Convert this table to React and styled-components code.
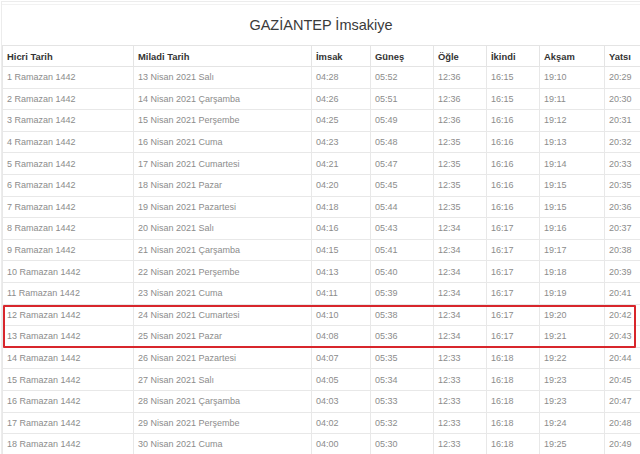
import React from "react";
import styled, { createGlobalStyle } from "styled-components";

const Global = createGlobalStyle`
  html, body { margin: 0; padding: 0; background: #fff; overflow: hidden; }
  body { font-family: "Liberation Sans", Arial, sans-serif; }
`;

const Page = styled.div`
  width: 700px;
  height: 454px;
  padding: 1px 0 0 1px;
  box-sizing: border-box;
`;

const Frame = styled.div`
  border-top: 1px solid #ececec;
  border-left: 1px solid #ececec;
  position: relative;
`;

const Title = styled.h1`
  margin: 2px 0 0 0;
  height: 41px;
  display: flex;
  align-items: center;
  justify-content: center;
  width: 638px;
  font-size: 14.5px;
  font-weight: 400;
  color: #3a3a3a;
  border-top: 1px solid #f2f2f2;
  box-sizing: border-box;
  padding-bottom: 1px;
`;

const Table = styled.table`
  border-collapse: collapse;
  table-layout: fixed;
  width: 668px;
  font-size: 9px;
`;

const Th = styled.th`
  text-align: left;
  font-weight: 700;
  font-size: 9.4px;
  color: #333;
  height: 21px;
  padding: 0 0 0 4px;
  border: 1px solid #e4e4e4;
  box-sizing: border-box;
`;

const Tr = styled.tr`
  height: 21.6px;
`;

const Td = styled.td`
  padding: 0 0 0 4px;
  color: #8c8c8c;
  font-size: 9px;
  border: 1px solid #e8e8e8;
  white-space: nowrap;
  overflow: hidden;
`;

const Highlight = styled.div`
  position: absolute;
  left: 1px;
  top: ${(p) => p.top}px;
  width: 629px;
  height: 39px;
  border: 2px solid #d8262c;
  border-radius: 1px;
  pointer-events: none;
`;

const cols = [131, 178, 59, 63, 53, 53, 65, 66];

const rows = [
  ["1 Ramazan 1442", "13 Nisan 2021 Salı", "04:28", "05:52", "12:36", "16:15", "19:10", "20:29"],
  ["2 Ramazan 1442", "14 Nisan 2021 Çarşamba", "04:26", "05:51", "12:36", "16:15", "19:11", "20:30"],
  ["3 Ramazan 1442", "15 Nisan 2021 Perşembe", "04:25", "05:49", "12:36", "16:16", "19:12", "20:31"],
  ["4 Ramazan 1442", "16 Nisan 2021 Cuma", "04:23", "05:48", "12:35", "16:16", "19:13", "20:32"],
  ["5 Ramazan 1442", "17 Nisan 2021 Cumartesi", "04:21", "05:47", "12:35", "16:16", "19:14", "20:33"],
  ["6 Ramazan 1442", "18 Nisan 2021 Pazar", "04:20", "05:45", "12:35", "16:16", "19:15", "20:35"],
  ["7 Ramazan 1442", "19 Nisan 2021 Pazartesi", "04:18", "05:44", "12:35", "16:16", "19:15", "20:36"],
  ["8 Ramazan 1442", "20 Nisan 2021 Salı", "04:16", "05:43", "12:34", "16:17", "19:16", "20:37"],
  ["9 Ramazan 1442", "21 Nisan 2021 Çarşamba", "04:15", "05:41", "12:34", "16:17", "19:17", "20:38"],
  ["10 Ramazan 1442", "22 Nisan 2021 Perşembe", "04:13", "05:40", "12:34", "16:17", "19:18", "20:39"],
  ["11 Ramazan 1442", "23 Nisan 2021 Cuma", "04:11", "05:39", "12:34", "16:17", "19:19", "20:41"],
  ["12 Ramazan 1442", "24 Nisan 2021 Cumartesi", "04:10", "05:38", "12:34", "16:17", "19:20", "20:42"],
  ["13 Ramazan 1442", "25 Nisan 2021 Pazar", "04:08", "05:36", "12:34", "16:17", "19:21", "20:43"],
  ["14 Ramazan 1442", "26 Nisan 2021 Pazartesi", "04:07", "05:35", "12:33", "16:18", "19:22", "20:44"],
  ["15 Ramazan 1442", "27 Nisan 2021 Salı", "04:05", "05:34", "12:33", "16:18", "19:23", "20:45"],
  ["16 Ramazan 1442", "28 Nisan 2021 Çarşamba", "04:03", "05:33", "12:33", "16:18", "19:23", "20:47"],
  ["17 Ramazan 1442", "29 Nisan 2021 Perşembe", "04:02", "05:32", "12:33", "16:18", "19:24", "20:48"],
  ["18 Ramazan 1442", "30 Nisan 2021 Cuma", "04:00", "05:30", "12:33", "16:18", "19:25", "20:49"],
];

const heads = ["Hicri Tarih", "Miladi Tarih", "İmsak", "Güneş", "Öğle", "İkindi", "Akşam", "Yatsı"];

export default function App() {
  return (
    <>
      <Global />
      <Page>
        <Frame>
          <Title>GAZİANTEP İmsakiye</Title>
          <Table>
            <colgroup>
              {cols.map((w, i) => (
                <col key={i} style={{ width: w }} />
              ))}
            </colgroup>
            <thead>
              <tr>
                {heads.map((h) => (
                  <Th key={h}>{h}</Th>
                ))}
              </tr>
            </thead>
            <tbody>
              {rows.map((r) => (
                <Tr key={r[0]}>
                  {r.map((c, i) => (
                    <Td key={i}>{c}</Td>
                  ))}
                </Tr>
              ))}
            </tbody>
          </Table>
          <Highlight top={303} />
        </Frame>
      </Page>
    </>
  );
}
